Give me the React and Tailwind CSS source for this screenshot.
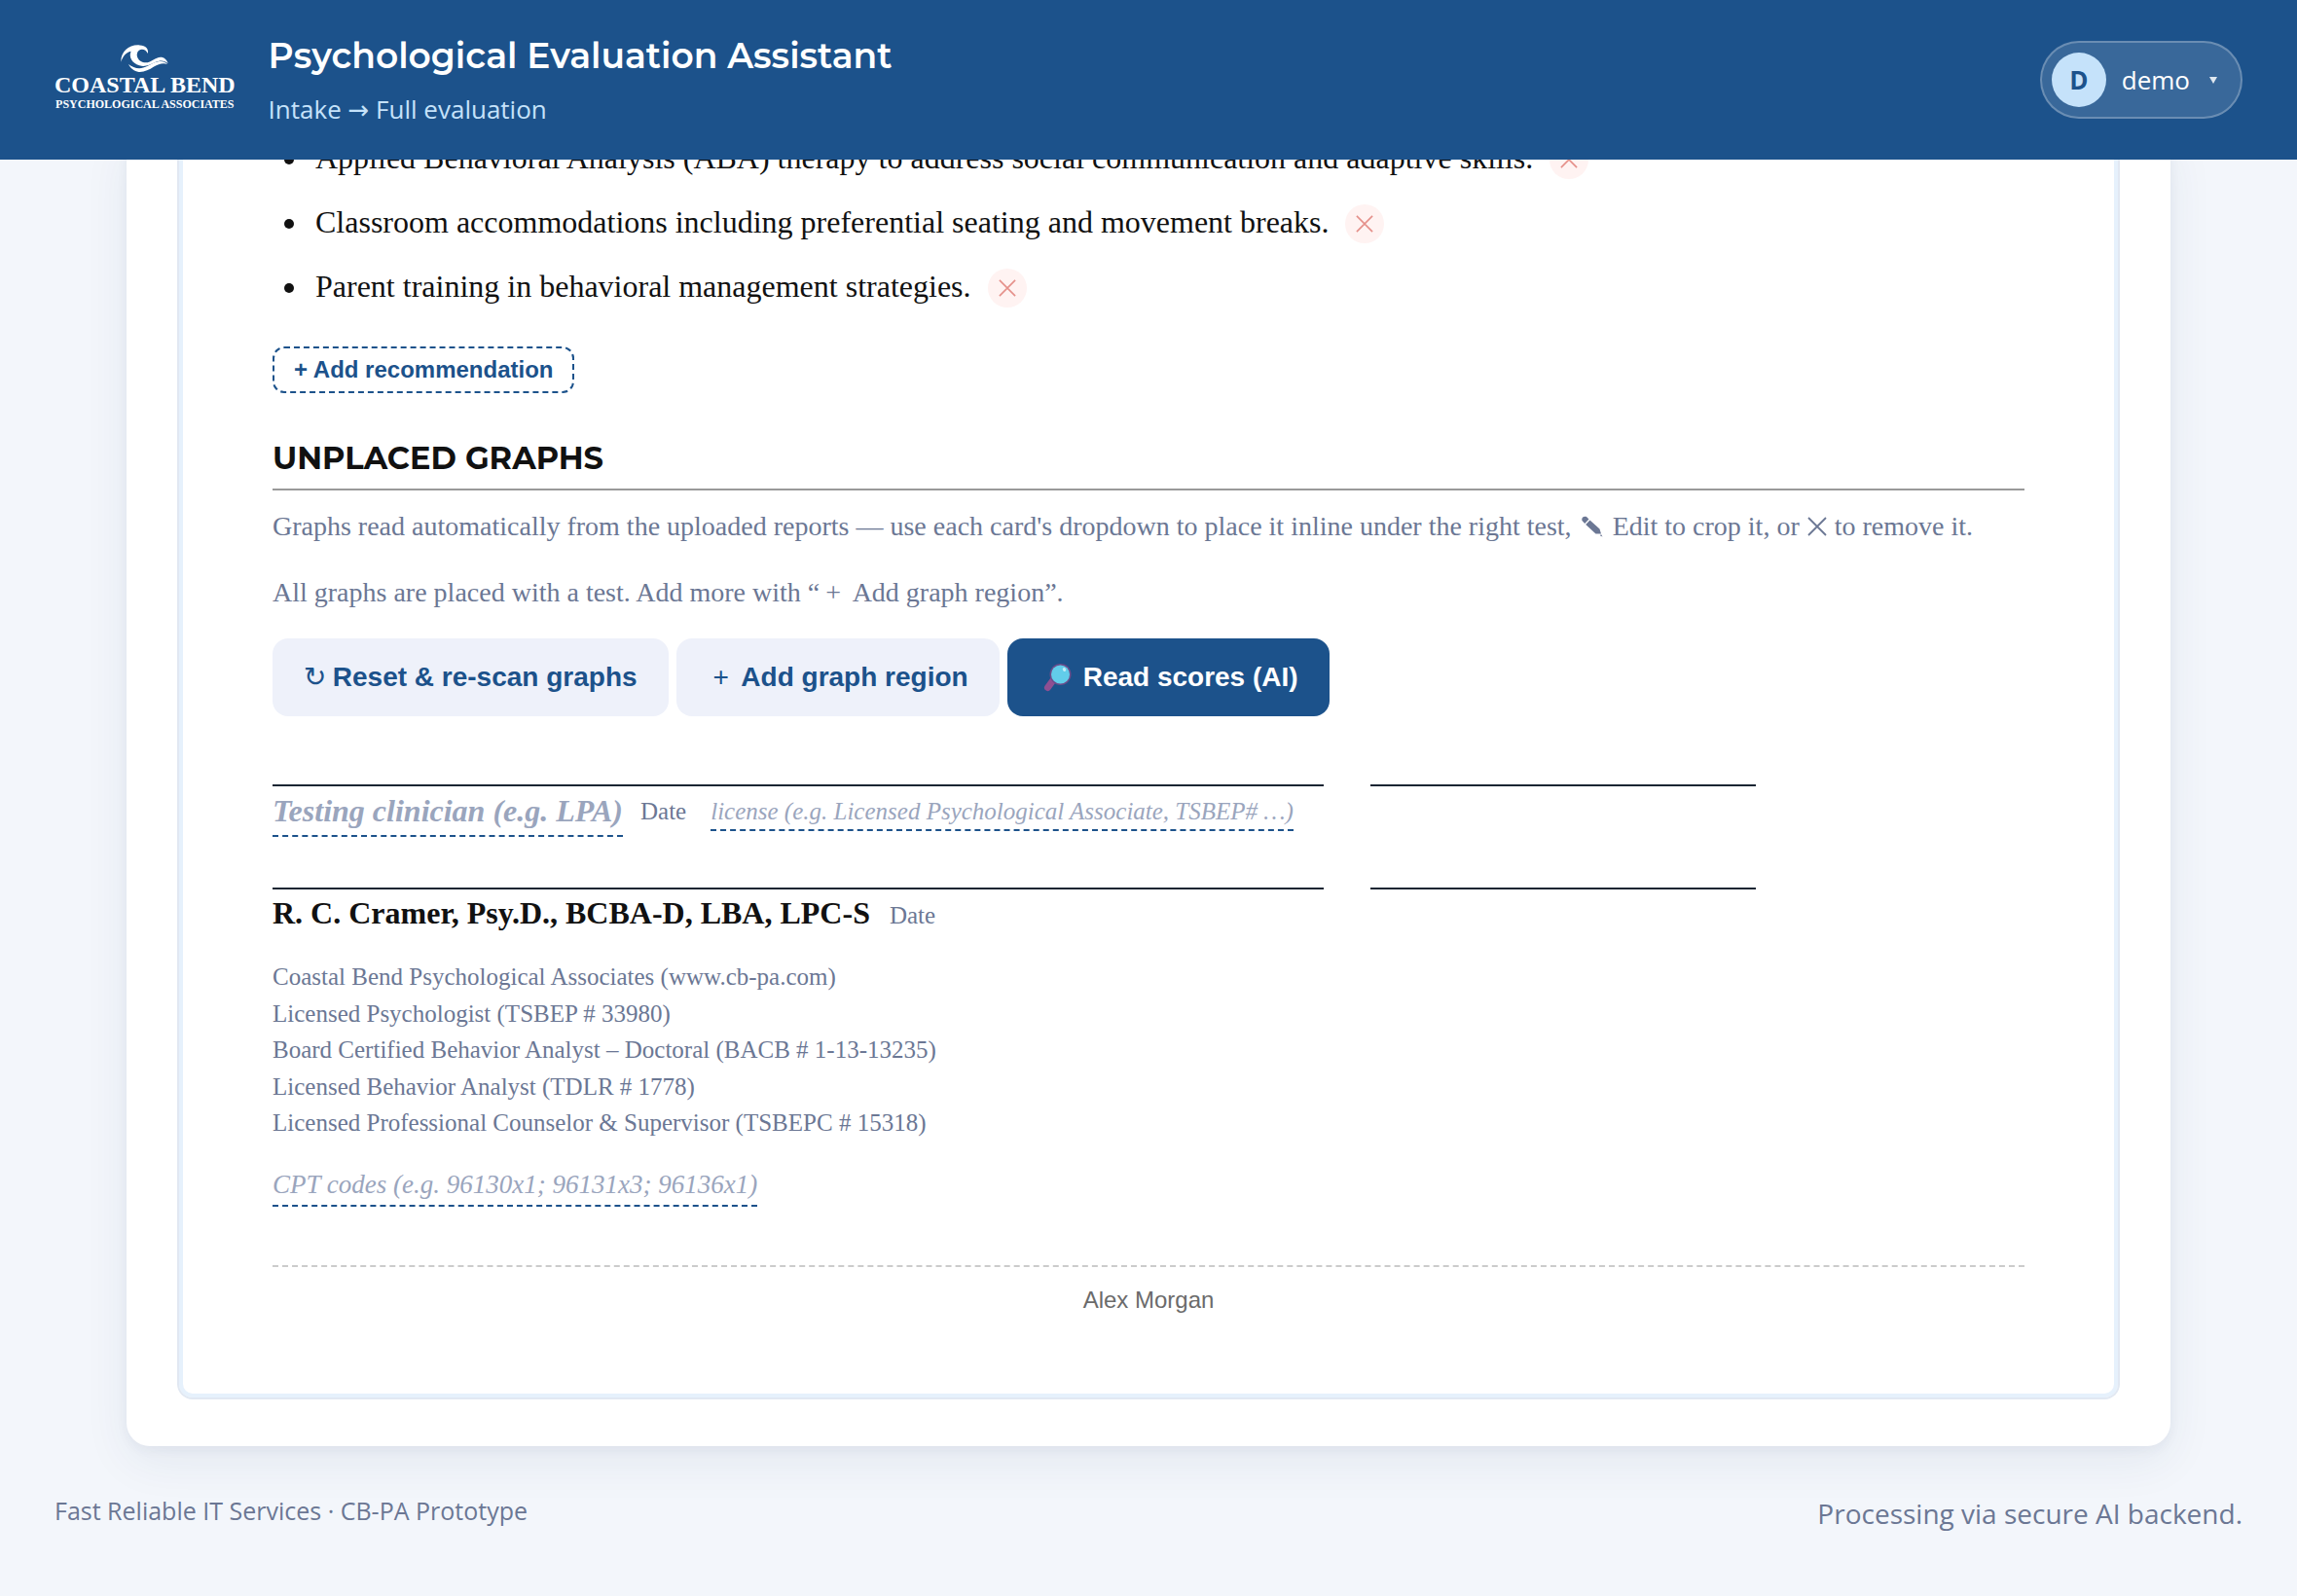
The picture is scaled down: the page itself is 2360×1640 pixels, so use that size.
const SERIF = "font-['Liberation_Serif',serif]";
const SANS = "font-['Liberation_Sans',sans-serif]";

function WaveMark() {
  return (
    <svg viewBox="252 40 154 90" className="h-[30px] w-[51px]" fill="currentColor" aria-hidden="true">
      <path d="M256 96 C255 62 283 41 314 44 C332 45 343 55 339 70 C334 58 321 54 312 60 C300 69 305 91 324 97 C350 103 360 79 382 81 C392 83 399 90 402 101 C390 90 377 91 362 97 C344 106 330 112 313 107 C290 100 279 80 287 63 C270 67 262 78 256 96 Z" />
      <path d="M279 103 C293 113 308 119 325 114 C345 107 357 96 375 94 C385 93 394 96 400 103 C385 98 372 103 358 111 C343 121 328 128 311 127 C297 125 286 116 279 103 Z" />
    </svg>
  );
}

function Cross({ className }) {
  return (
    <svg viewBox="0 0 20 20" className={className} fill="none" stroke="currentColor" strokeWidth="1.8" aria-hidden="true">
      <path d="M1 1 19 19M19 1 1 19" />
    </svg>
  );
}

function Pencil() {
  return (
    <svg viewBox="0 0 22 22" className="mx-[3px] inline h-[22px] w-[22px] align-[-2px]" fill="currentColor" aria-hidden="true">
      <path d="M0.500 5C-0.500 2 2 0 5 1L7.500 3.500 3.200 8ZM4.200 9 8.500 4.500 18.500 13.500 20 18.500 14.500 18.500ZM20 19l1.500 2.500-2.500-1z" />
    </svg>
  );
}

function Magnifier() {
  return (
    <svg viewBox="0 0 30 30" className="ml-1 h-[30px] w-[30px]" aria-hidden="true">
      <path d="M5.500 25.500 11 18" stroke="#8f4f92" strokeWidth="7" strokeLinecap="round" />
      <circle cx="18.500" cy="12" r="11" fill="#6b4d8c" />
      <circle cx="18.500" cy="12" r="9.500" fill="#62cdea" />
      <ellipse cx="22.500" cy="7" rx="1.600" ry="2" fill="#c4eefa" transform="rotate(-30 22.500 7)" />
    </svg>
  );
}

function WidePlus() {
  return <span className="inline-block w-7 text-center font-normal">+</span>;
}

const recommendations = [
  "Applied Behavioral Analysis (ABA) therapy to address social communication and adaptive skills.",
  "Classroom accommodations including preferential seating and movement breaks.",
  "Parent training in behavioral management strategies.",
];

const credentials = [
  "Coastal Bend Psychological Associates (www.cb-pa.com)",
  "Licensed Psychologist (TSBEP # 33980)",
  "Board Certified Behavior Analyst – Doctoral (BACB # 1-13-13235)",
  "Licensed Behavior Analyst (TDLR # 1778)",
  "Licensed Professional Counselor & Supervisor (TSBEPC # 15318)",
];

function SignatureLines() {
  return (
    <div className="flex gap-12">
      <div className="w-3/5 border-t-2 border-[#1a2533]" />
      <div className="w-[22%] border-t-2 border-[#1a2533]" />
    </div>
  );
}

function Header() {
  return (
    <header className="sticky top-0 z-10 flex items-center bg-[#1c528b] px-14 py-8 text-white">
      <div className="flex flex-col items-center pb-1 font-['Liberation_Serif',serif] font-bold whitespace-nowrap">
        <WaveMark />
        <div className="text-[24px] leading-[24px]">COASTAL BEND</div>
        <div className="text-[12px] leading-[16px]">PSYCHOLOGICAL ASSOCIATES</div>
      </div>
      <div className="ml-[34px] grow">
        <h1 className="font-['Montserrat','Inter',sans-serif] text-[36px] leading-[50px] font-semibold">
          Psychological Evaluation Assistant
        </h1>
        <p className="mt-2.5 font-['Open_Sans',sans-serif] text-[26px] leading-[40px] text-[#c5e2fa]">
          Intake <span className="font-['DejaVu_Sans',sans-serif] leading-none">→</span> Full evaluation
        </p>
      </div>
      <button
        type="button"
        className="flex h-20 items-center rounded-full border-2 border-white/25 bg-white/13 pr-6 pl-[10px] font-['Open_Sans',sans-serif] text-[26px]"
      >
        <span className="grid size-14 place-items-center rounded-full bg-[#c5e2fa] font-bold text-[#1c528b]">D</span>
        <span className="ml-4">demo</span>
        <svg viewBox="0 0 8 7" className="ml-5 h-[7px] w-2" fill="#dfe8f0" aria-hidden="true">
          <path d="M0 0h8L4 7z" />
        </svg>
      </button>
    </header>
  );
}

export default function App() {
  return (
    <div className="min-h-screen bg-[#f3f6fb]">
      <Header />

      <main className="-mt-[26px] px-[130px]">
        <div className="rounded-b-3xl bg-white px-[52px] pb-12 shadow-[0_16px_48px_rgba(30,50,100,0.07),0_4px_12px_rgba(30,50,100,0.05)]">
          <article
            className={`rounded-b-2xl border-2 border-t-0 border-[#e1e8f2] px-24 pb-[82px] text-[#111] shadow-[inset_0_0_0_4px_#e6f1fc] ${SERIF}`}
          >
            <ul className="list-disc pl-[38px] text-[32px] leading-[48px]">
              {recommendations.map((text) => (
                <li key={text} className="pb-[18px] pl-1.5">
                  {text}
                  <button
                    type="button"
                    aria-label="Remove recommendation"
                    className="ml-[17px] inline-grid size-10 place-items-center rounded-full bg-[#fff3f2] align-baseline text-[#e5908a]"
                  >
                    <Cross className="size-[18px]" />
                  </button>
                </li>
              ))}
            </ul>

            <button
              type="button"
              className={`mt-5 block h-12 rounded-xl border-2 border-dashed border-[#1c528b] px-5 text-[24px] font-bold text-[#1c528b] ${SANS}`}
            >
              + Add recommendation
            </button>

            <h2 className="mt-[46px] border-b-2 border-[#999] pb-2.5 font-['Montserrat','Inter',sans-serif] text-[32px] leading-[42px] font-bold">
              UNPLACED GRAPHS
            </h2>
            <p className="mt-4 text-[28px] leading-[42px] text-[#6b7794]">
              Graphs read automatically from the uploaded reports — use each card's dropdown to place it inline under the
              right test, <Pencil /> Edit to crop it, or <Cross className="mx-px inline size-5 align-[-1px]" /> to remove it.
            </p>
            <p className="mt-[26px] text-[28px] leading-[42px] text-[#6b7794]">
              All graphs are placed with a test. Add more with “<WidePlus /> Add graph region”.
            </p>

            <div className={`mt-[26px] flex gap-2 text-[28px] font-bold text-[#1c528b] ${SANS}`}>
              <button type="button" className="h-20 rounded-2xl bg-[#eef1fa] px-8">
                <span className="inline-block w-[22px] font-['DejaVu_Sans',sans-serif] font-normal">↻</span> Reset &amp;
                re-scan graphs
              </button>
              <button type="button" className="h-20 rounded-2xl bg-[#eef1fa] px-8">
                <WidePlus /> Add graph region
              </button>
              <button type="button" className="flex h-20 items-center gap-3 rounded-2xl bg-[#1c528b] px-8 text-white">
                <Magnifier />
                Read scores (AI)
              </button>
            </div>

            <section className="mt-[70px] text-[25px] text-[#6b7794]">
              <SignatureLines />
              <div className="flex h-[104px] items-start">
                <input
                  aria-label="Testing clinician"
                  placeholder="Testing clinician (e.g. LPA)"
                  className="h-[52px] [field-sizing:content] border-b-2 border-dashed border-[#1c528b] text-[32px] font-bold italic placeholder:text-[#9aa5bd]"
                />
                <label htmlFor="license" className="ml-[18px] leading-[52px]">
                  Date
                </label>
                <input
                  id="license"
                  aria-label="License"
                  placeholder="license (e.g. Licensed Psychological Associate, TSBEP# …)"
                  className="ml-[25px] h-[46px] [field-sizing:content] border-b-2 border-dashed border-[#1c528b] pt-2 italic placeholder:text-[#9aa5bd]"
                />
              </div>
              <SignatureLines />
              <div className="flex items-baseline gap-5 leading-[48px]">
                <strong className="text-[32px] text-[#111]">R. C. Cramer, Psy.D., BCBA-D, LBA, LPC-S</strong>
                <span>Date</span>
              </div>
            </section>

            <address className="mt-5 text-[25px] leading-normal text-[#6b7794] not-italic">
              {credentials.map((line) => (
                <div key={line}>{line}</div>
              ))}
            </address>

            <input
              aria-label="CPT codes"
              placeholder="CPT codes (e.g. 96130x1; 96131x3; 96136x1)"
              className="mt-6 block h-[43px] [field-sizing:content] border-b-2 border-dashed border-[#1c528b] text-[27px] italic placeholder:text-[#9aa5bd]"
            />

            <div
              className={`mt-[60px] border-t-2 border-dashed border-[#ccc] pt-4 text-center text-[24px] leading-[36px] text-[#6b6b6b] ${SANS}`}
            >
              Alex Morgan
            </div>
          </article>
        </div>
      </main>

      <footer className="flex items-start justify-between px-14 pt-12 pb-16 font-['Open_Sans',sans-serif] text-[#6b7794]">
        <span className="text-[25px] leading-[36px]">Fast Reliable IT Services · CB-PA Prototype</span>
        <span className="text-[28px] leading-[42px]">Processing via secure AI backend.</span>
      </footer>
    </div>
  );
}
